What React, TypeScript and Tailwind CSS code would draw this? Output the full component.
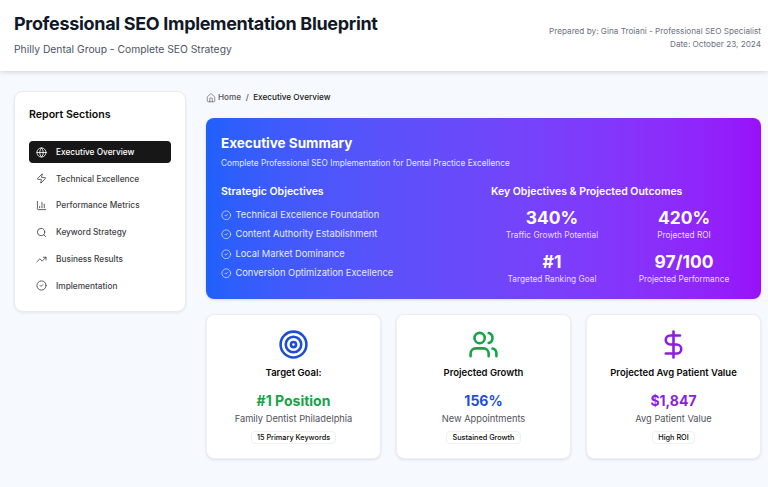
import React from 'react';
import { BarChart3, CircleCheck, DollarSign, Globe, House, Search, Target, TrendingUp, Users, Zap } from 'lucide-react';

const sections = [
  { label: 'Executive Overview', icon: Globe, active: true },
  { label: 'Technical Excellence', icon: Zap },
  { label: 'Performance Metrics', icon: BarChart3 },
  { label: 'Keyword Strategy', icon: Search },
  { label: 'Business Results', icon: TrendingUp },
  { label: 'Implementation', icon: CircleCheck },
];

const objectives = [
  'Technical Excellence Foundation',
  'Content Authority Establishment',
  'Local Market Dominance',
  'Conversion Optimization Excellence',
];

const outcomes = [
  { value: '340%', label: 'Traffic Growth Potential' },
  { value: '420%', label: 'Projected ROI' },
  { value: '#1', label: 'Targeted Ranking Goal' },
  { value: '97/100', label: 'Projected Performance' },
];

const cards = [
  { title: 'Target Goal:', icon: Target, iconColor: 'text-[#1d4ed8]', value: '#1 Position', valueColor: 'text-[#16a34a]', sub: 'Family Dentist Philadelphia', badge: '15 Primary Keywords' },
  { title: 'Projected Growth', icon: Users, iconColor: 'text-[#16a34a]', value: '156%', valueColor: 'text-[#1d4ed8]', sub: 'New Appointments', badge: 'Sustained Growth' },
  { title: 'Projected Avg Patient Value', icon: DollarSign, iconColor: 'text-[#8b1ee0]', value: '$1,847', valueColor: 'text-[#8b1ee0]', sub: 'Avg Patient Value', badge: 'High ROI' },
];

export default function App() {
  return (
    <div className="h-[487px] overflow-hidden bg-[#f6f9fd] font-['Inter',sans-serif] text-[#0a0a0a]">
      <header className="flex h-[71px] items-start justify-between bg-white pl-[14px] pr-[7px] shadow-[0_1px_5px_rgba(0,0,0,0.16)]">
        <div className="pt-[10.5px]">
          <h1 className="text-[18px] leading-[26px] font-bold tracking-[-0.018em] text-[#111827]">Professional SEO Implementation Blueprint</h1>
          <p className="mt-[4px] text-[10.3px] leading-[16px] text-[#4b5563]">Philly Dental Group - Complete SEO Strategy</p>
        </div>
        <div className="pt-[25px] text-right text-[8.2px] leading-[12.5px] text-[#6b7280]">
          <p>Prepared by: Gina Troiani - Professional SEO Specialist</p>
          <p>Date: October 23, 2024</p>
        </div>
      </header>

      <div className="flex items-start gap-[20px] pl-[14px] pr-[6px] pt-[20px]">
        <aside className="h-[221px] w-[172px] shrink-0 rounded-[9px] border border-[#e8ebf0] bg-white px-[14px] pt-[14px] shadow-[0_1px_3px_rgba(0,0,0,0.08)]">
          <h2 className="text-[10.6px] leading-[18px] font-semibold">Report Sections</h2>
          <nav className="mt-[17px] flex flex-col gap-[4.8px]">
            {sections.map((s) => {
              const Icon = s.icon;
              return (
                <div
                  key={s.label}
                  className={`flex h-[22px] items-center gap-[9px] rounded-[4px] pl-[7px] text-[8.3px] font-medium ${s.active ? 'bg-[#171717] text-white' : 'text-[#3f3f46]'}`}
                >
                  <Icon size={11} strokeWidth={1.8} />
                  <span>{s.label}</span>
                </div>
              );
            })}
          </nav>
        </aside>

        <main className="w-[555px]">
          <div className="flex h-[13px] items-center text-[8.2px] font-medium">
            <House size={10} strokeWidth={1.5} className="text-[#52525b]" />
            <span className="ml-[2px] text-[#52525b]">Home</span>
            <span className="mx-[4.5px] text-[#52525b]">/</span>
            <span className="text-[#18181b]">Executive Overview</span>
          </div>

          <section className="mt-[14px] h-[181px] rounded-[8px] bg-gradient-to-r from-[#1f60fb] to-[#9810fa] px-[15px] pt-[15px] text-white shadow-[0_1px_3px_rgba(0,0,0,0.12)]">
            <h2 className="text-[13.5px] leading-[20px] font-bold">Executive Summary</h2>
            <p className="mt-[4px] text-[8.27px] leading-[13px] text-[#dbeafe]">Complete Professional SEO Implementation for Dental Practice Excellence</p>
            <div className="mt-[14px] grid grid-cols-[256px_256px] gap-[14px]">
              <div>
                <h3 className="text-[10.5px] leading-[16px] font-semibold">Strategic Objectives</h3>
                <ul className="mt-[5px] flex flex-col">
                  {objectives.map((o) => (
                    <li key={o} className="flex h-[19.5px] items-center gap-[4px] text-[9.3px] text-[#e4e9fe]">
                      <CircleCheck size={10.5} strokeWidth={1.6} />
                      <span>{o}</span>
                    </li>
                  ))}
                </ul>
              </div>
              <div>
                <h3 className="text-[10.5px] leading-[16px] font-semibold">Key Objectives &amp; Projected Outcomes</h3>
                <div className="mt-[7px] grid grid-cols-[122px_122px] gap-x-[10px] gap-y-[10px]">
                  {outcomes.map((o) => (
                    <div key={o.label} className="text-center">
                      <p className="text-[17.4px] leading-[22px] font-bold">{o.value}</p>
                      <p className="text-[8.3px] leading-[12px] text-[#e9dcff]">{o.label}</p>
                    </div>
                  ))}
                </div>
              </div>
            </div>
          </section>

          <div className="mt-[15px] grid grid-cols-3 gap-[15px]">
            {cards.map((c) => {
              const Icon = c.icon;
              return (
                <div key={c.title} className="flex h-[145px] flex-col items-center rounded-[8px] border border-[#eceef2] bg-white pt-[14px] shadow-[0_1px_3px_rgba(0,0,0,0.1)]">
                  <Icon size={31} strokeWidth={2} className={c.iconColor} />
                  <h3 className="mt-[5px] text-[9.5px] leading-[15px] font-semibold">{c.title}</h3>
                  <p className={`mt-[11px] text-[14px] leading-[20px] font-bold ${c.valueColor}`}>{c.value}</p>
                  <p className="mt-[1px] text-[9.3px] leading-[14px] text-[#52525b]">{c.sub}</p>
                  <span className="mt-[5px] rounded-[4px] border border-[#eef0f3] px-[5px] text-[7.3px] leading-[11px] font-medium">{c.badge}</span>
                </div>
              );
            })}
          </div>
        </main>
      </div>
    </div>
  );
}
